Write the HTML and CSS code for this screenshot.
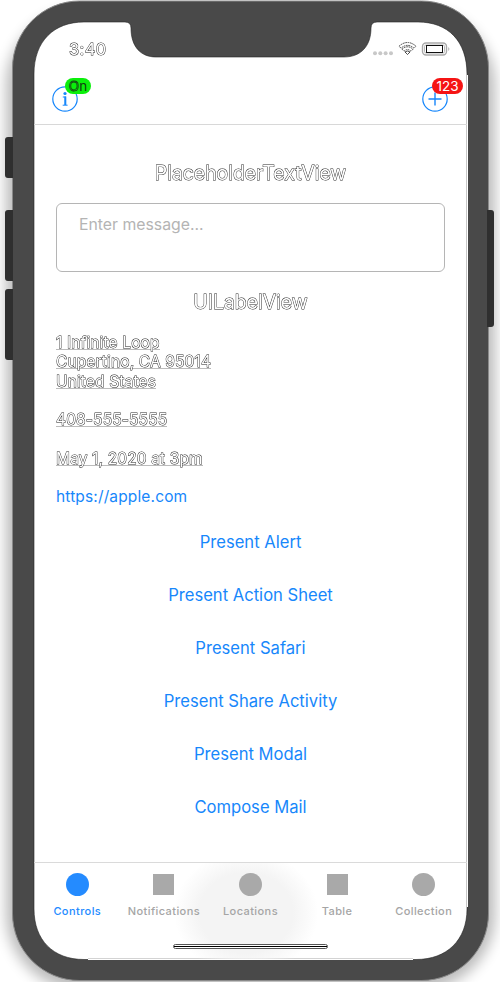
FILE: index.html
```html
<!DOCTYPE html>
<html lang="en">
<head>
<meta charset="utf-8">
<title>Controls</title>
<link rel="stylesheet" href="styles.css">
</head>
<body>
<div class="stage">
  <svg class="frame" width="500" height="982" viewBox="0 0 500 982" aria-hidden="true">
    <defs>
      <filter id="soft" x="-10%" y="-10%" width="120%" height="120%"><feGaussianBlur stdDeviation="7"/></filter>
    </defs>
    <rect x="6" y="10" width="489" height="980" rx="76" fill="#000" opacity=".27" filter="url(#soft)"/>
    <rect x="12.5" y="1" width="476" height="979.5" rx="67" fill="#494949" stroke="#8a8a8a" stroke-width="1"/>
    <path d="M5 140Q5 137 8 137H13V178H8Q5 178 5 175ZM5 213Q5 210 8 210H13V281H8Q5 281 5 278ZM5 292Q5 289 8 289H13V360H8Q5 360 5 357ZM494 213Q494 210 491 210H487V327H491Q494 327 494 324Z" fill="#2f2f2f"/>
    <path d="M84 22H125Q131 22 131 28C131 47 141 57 156 57H344C361 57 371 46 371 28Q371 22 377 22H418C448 22 467 41 467 74V909C467 940 447 959.500 416 959.500H84C53 959.500 34 940 34 909V74C34 41 54 22 84 22Z" fill="#fff" stroke="#222" stroke-width=".6"/>
    <path d="M467.500 75V907" stroke="#fff"/>
    <path d="M466.500 75V907M88 958.500H413" stroke="#c8c8c8" stroke-width=".8"/>
    <path d="M88 959.500H413" stroke="#fff"/>
  </svg>

  <div class="screen">
    <header class="status">
      <span class="time outline">3:40</span>
      <svg class="indicators" width="80" height="18" viewBox="0 0 80 18" aria-hidden="true">
        <g fill="#c8c8c8"><circle cx="3" cy="14.300" r="2"/><circle cx="8.300" cy="14.300" r="2"/><circle cx="13.600" cy="14.300" r="2"/><circle cx="19" cy="14.300" r="2"/></g>
        <g fill="none" stroke="#222" stroke-width=".8">
          <path d="M27 7.200Q35.500-.2 44 7.200L42 9.200Q35.500 3.500 29 9.200Z" stroke-dasharray="1.700 .7"/>
          <path d="M30 10.200Q35.500 5.400 41 10.200L39 12.200Q35.500 9 32 12.200Z" stroke-dasharray="1.700 .7"/>
          <path d="M33 13Q35.500 11 38 13L35.500 15.500Z"/>
        </g>
        <rect x="50.500" y="4" width="24" height="12" rx="3.500" fill="none" stroke="#aaa" stroke-width="1.400"/>
        <rect x="52.500" y="6" width="20" height="8" rx="1.500" fill="#fff" stroke="#aaa" stroke-width=".8"/>
        <rect x="54.500" y="6.500" width="16" height="7" fill="#fff" stroke="#111" stroke-width="1"/>
        <path d="M76.300 8Q78.500 10 76.300 12Z" fill="#aaa"/>
      </svg>
    </header>

    <nav class="navbar">
      <div class="nav-item">
        <svg width="26" height="26" viewBox="0 0 26 26" fill="none" stroke="#1787fb" aria-hidden="true">
          <circle cx="13" cy="13" r="12.200" stroke-width="1.200"/>
          <circle cx="13" cy="7.500" r="1.600" fill="#1787fb" stroke="none"/>
          <path d="M10.800 11H13.400V19" stroke-width="1.100"/><path d="M13.300 10.500V19" stroke-width="2"/><path d="M10.700 19.200H15.600" stroke-width="1"/>
        </svg>
        <span class="badge on"><span class="ring">O</span>n</span>
      </div>
      <div class="nav-item add">
        <svg width="26" height="26" viewBox="0 0 26 26" fill="none" stroke="#1787fb" stroke-width="1.200" aria-hidden="true">
          <circle cx="13" cy="13" r="12.200"/><path d="M6.500 13H19.500M13 6.500V19.500" stroke-width="1.400"/>
        </svg>
        <span class="badge count">123</span>
      </div>
    </nav>

    <main class="content">
      <h2 class="outline title-a">PlaceholderTextView</h2>
      <div class="field">Enter message...</div>
      <h2 class="outline title-b">UILabelView</h2>
      <div class="details">
        <div><span class="data outline">1 Infinite Loop</span></div>
        <div><span class="data outline">Cupertino, CA 95014</span></div>
        <div><span class="data outline">United States</span></div>
        <div class="gap"><span class="data outline">408-555-5555</span></div>
        <div class="gap"><span class="data outline">May 1, 2020 at 3pm</span></div>
        <div class="gap link">https://apple.com</div>
      </div>
      <div class="actions">
        <div>Present Alert</div>
        <div>Present Action Sheet</div>
        <div>Present Safari</div>
        <div>Present Share Activity</div>
        <div>Present Modal</div>
        <div>Compose Mail</div>
      </div>
    </main>

    <footer class="tabs">
      <div class="tab active"><i class="dot"></i><span>Controls</span></div>
      <div class="tab"><i class="square"></i><span>Notifications</span></div>
      <div class="tab"><i class="dot"></i><span>Locations</span></div>
      <div class="tab"><i class="square"></i><span>Table</span></div>
      <div class="tab"><i class="dot"></i><span>Collection</span></div>
      <div class="home"></div>
    </footer>
  </div>
</div>
</body>
</html>
```
FILE: styles.css
```css
* { box-sizing: border-box; }
body { margin: 0; background: #fff; font-family: Inter, "Liberation Sans", sans-serif; }
.stage { position: relative; width: 500px; height: 982px; overflow: hidden; padding: 22px 33px 0 34px; }
.frame { position: absolute; left: 0; top: 0; }
.screen { position: relative; width: 433px; height: 937px; display: flex; flex-direction: column; }
.outline { color: #fff; -webkit-text-stroke: .9px #222; paint-order: stroke fill; opacity: .99; }

.status { height: 57px; display: flex; justify-content: space-between; padding: 17px 15px 0 35px; }
.time { font-size: 16.5px; line-height: 21px; letter-spacing: .4px; }

.navbar { height: 46px; display: flex; justify-content: space-between; padding: 7px 19px 0 18px; border-bottom: 1px solid #d8d8d8; }
.nav-item { position: relative; width: 26px; height: 26px; }
.nav-item svg { display: block; }
.badge { position: absolute; top: -8px; height: 16px; line-height: 17px; border-radius: 8px; font-size: 13.5px; text-align: center; }
.on { left: 13px; width: 26px; background: #0bef0b; color: #113c11; }
.ring { color: #0bef0b; -webkit-text-stroke: .8px #174817; }
.count { left: 10px; width: 31px; background: #f51414; color: #fff; }

.content { flex: 1; padding: 36px 22px 0; }
h2 { margin: 0; font-weight: 400; font-size: 19.4px; line-height: 24px; text-align: center; }
.field { margin-top: 18px; height: 69px; border: 1.4px solid #b5b5b5; border-radius: 6px; padding: 11px 22px; font-size: 15.8px; line-height: 20px; color: #b4b4b4; }
.title-b { margin-top: 18px; }
.details { margin-top: 19px; font-size: 15.5px; letter-spacing: .14px; line-height: 19.25px; }
.details > div { height: 19.25px; white-space: nowrap; }
.details .gap { margin-top: 19.25px; }
.data { display: inline-block; height: 17px; line-height: 19.25px; border-bottom: 1px solid #bbb; vertical-align: top; }
.link, .actions { color: #1787fb; }
.actions { margin-top: 10px; font-size: 16.6px; line-height: 53px; text-align: center; }

.tabs { position: relative; height: 97px; border-top: 1px solid #dadada; display: flex; background: radial-gradient(ellipse 72px 62px at 49% 52%, #f4f4f4 65%, transparent 100%); }
.tab { flex: 1; display: flex; flex-direction: column; align-items: center; padding: 10px 0 0; font-size: 11px; font-weight: 500; letter-spacing: .42px; line-height: 14px; color: #a5a5a5; }
.tab i { background: #a9a9a9; }
.dot { width: 23px; height: 23px; border-radius: 50%; margin-bottom: 8px; }
.square { width: 21px; height: 21px; margin: 1px 0 9px; }
.tab.active { color: #248bff; }
.active .dot { background: #248bff; }
.home { position: absolute; left: 139px; top: 81px; width: 155px; height: 5px; border: 1px solid #555; border-radius: 3px; background: linear-gradient(#fff 33%, #000 33% 67%, #fff 67%); }
```
